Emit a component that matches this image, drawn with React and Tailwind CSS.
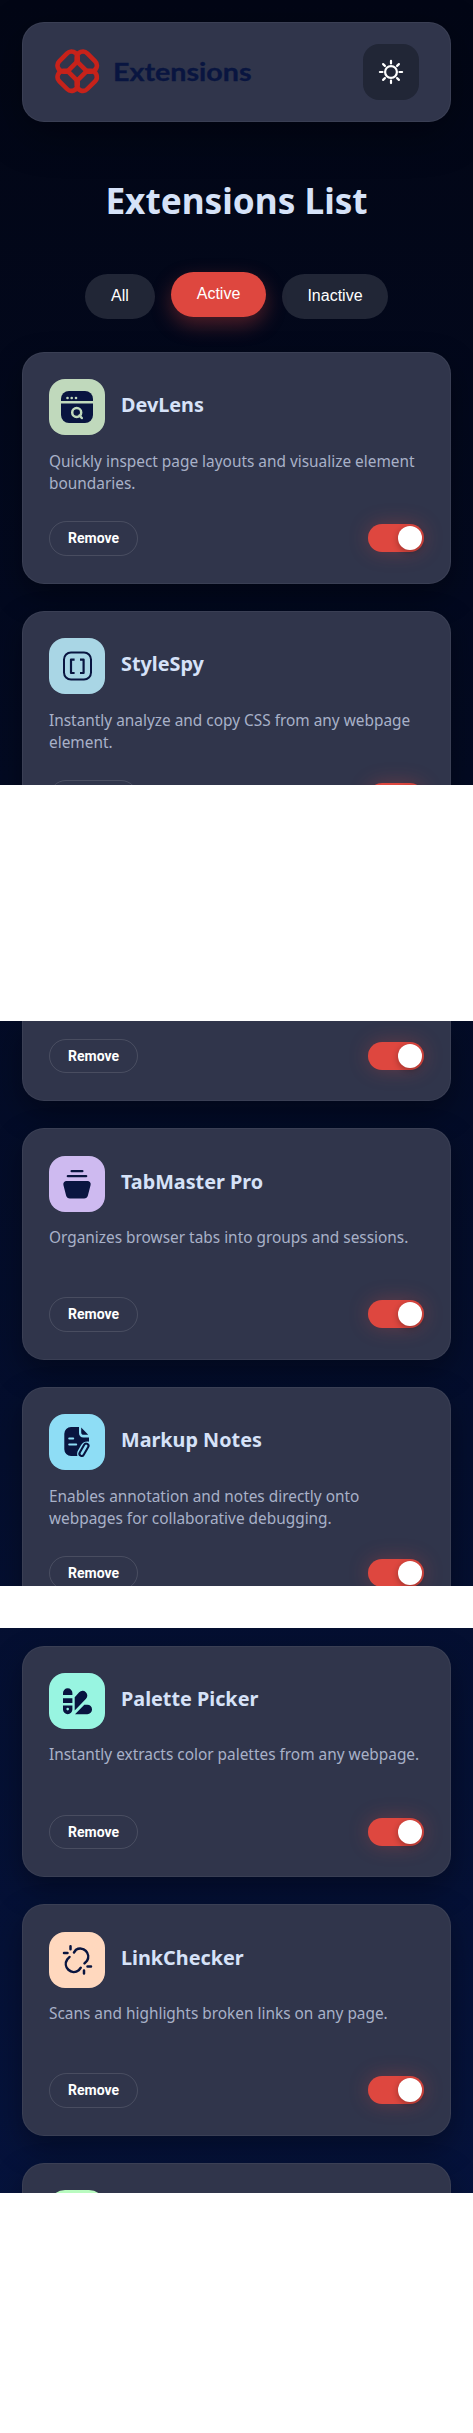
const navy = "#091540";

function Logo() {
  return (
    <svg width="200" height="46" viewBox="0 0 200 46" className="block">
      <g fill="none" stroke="#C7221A" strokeWidth="4.6" strokeLinejoin="round">
        <path d="M23 12.5V8.6a6.2 6.2 0 0 0-10.6-3.9L4.7 12.4a6.2 6.2 0 0 0 3.9 10.6h3.9z" transform="translate(-.3 -.3)" />
        <path d="M23 12.5V8.6a6.2 6.2 0 0 0-10.6-3.9L4.7 12.4a6.2 6.2 0 0 0 3.9 10.6h3.9z" transform="translate(44.7 -.3) scale(-1 1)" />
        <path d="M23 12.5V8.6a6.2 6.2 0 0 0-10.6-3.9L4.7 12.4a6.2 6.2 0 0 0 3.9 10.6h3.9z" transform="translate(-.3 44.7) scale(1 -1)" />
        <path d="M23 12.5V8.6a6.2 6.2 0 0 0-10.6-3.9L4.7 12.4a6.2 6.2 0 0 0 3.9 10.6h3.9z" transform="translate(44.7 44.7) scale(-1 -1)" />
      </g>
      <text x="58" y="32" fill={navy} stroke={navy} strokeWidth="0.35" fontFamily="Lato, sans-serif" fontWeight="700" fontSize="25.5" textLength="138.5" lengthAdjust="spacingAndGlyphs">Extensions</text>
    </svg>
  );
}

function Sun() {
  return (
    <svg width="26" height="26" viewBox="0 0 26 26" fill="none" stroke="#fff" strokeWidth="2.2" strokeLinecap="round">
      <circle cx="13" cy="13" r="5.9" />
      <path d="M13 1.9v2.6M13 21.5v2.6M1.9 13h2.6M21.5 13h2.6M5.1 5.1l1.8 1.8M19.1 19.1l1.8 1.8M5.1 20.9l1.8-1.8M19.1 6.9l1.8-1.8" />
    </svg>
  );
}

const icons = {
  lens: (
    <g>
      <path d="M12 20a8 8 0 0 1 8-8h16a8 8 0 0 1 8 8v2H12z" fill={navy} />
      <path d="M12 24.6h32V36a8 8 0 0 1-8 8H20a8 8 0 0 1-8-8z" fill={navy} />
      <g fill="#C0D9BC">
        <circle cx="18.5" cy="19" r="1.3" /><circle cx="22.7" cy="19" r="1.3" /><circle cx="27" cy="19" r="1.3" />
      </g>
      <g fill="none" stroke="#C0D9BC" strokeWidth="2.5" strokeLinecap="round">
        <circle cx="27.7" cy="33.5" r="4.5" /><path d="M30.5 36.5l2.3 2.5" />
      </g>
    </g>
  ),
  spy: (
    <g fill="none" stroke={navy} strokeWidth="2">
      <rect x="15" y="14.5" width="27" height="27" rx="7" />
      <path d="M25.6 21.6H22v13.4h3.6M31 21.6h3.6v13.4H31" strokeWidth="2.2" strokeLinejoin="round" />
    </g>
  ),
  tabs: (
    <g fill={navy}>
      <rect x="21.5" y="14" width="13" height="2.3" rx="1.1" />
      <rect x="17.7" y="19" width="20.6" height="2.3" rx="1.1" />
      <path d="M17.5 25h21a3.2 3.2 0 0 1 3.1 4l-2.7 10.4a4 4 0 0 1-3.9 3H21a4 4 0 0 1-3.9-3L14.4 29a3.2 3.2 0 0 1 3.1-4z" />
    </g>
  ),
  notes: (
    <g>
      <path d="M22 13h8v6a4.3 4.3 0 0 0 4.3 4.5H40v4.2c-4-.5-6.5 1-8 3.6l-3 5.2c-1 1.8-1 3.5-.6 5.5H22a6.7 6.7 0 0 1-6.7-6.7V19.7A6.7 6.7 0 0 1 22 13z" fill={navy} />
      <path d="M32.2 13.5l7 7.3h-4.4a2.6 2.6 0 0 1-2.6-2.6z" fill={navy} />
      <path d="M20.2 24.6h4M20.2 30.6h7" stroke="#8EDDF5" strokeWidth="2" strokeLinecap="round" />
      <rect x="32.7" y="29" width="4.6" height="13.5" rx="2.3" transform="rotate(30 35 35.7)" fill="none" stroke={navy} strokeWidth="2.1" />
    </g>
  ),
  palette: (
    <g fill={navy}>
      <path d="M14 22v-2a4.7 4.7 0 0 1 9.4 0v2zM14 25.2h9.4v4.7H14z" />
      <path fillRule="evenodd" d="M14 32.5h9.4v4a4.7 4.7 0 0 1-9.4 0zM18.7 34.8a1.3 1.3 0 1 0 0 2.6 1.3 1.3 0 0 0 0-2.6z" />
      <path d="M25.7 24.2l4.5-4.9a4.7 4.7 0 0 1 6.8 6.5L25.7 37.5zM26 41.2l9.3-9.5h3a4.75 4.75 0 0 1 0 9.5z" />
    </g>
  ),
  link: (
    <g fill="none" stroke={navy} strokeWidth="2.5" strokeLinecap="round">
      <path d="M25 20.5l2-2.7a8 8 0 0 1 11 11l-2.5 2.5M20.5 25l-2.3 2.5a8 8 0 0 0 11.5 10.8l2-2.5" />
      <path d="M21.5 14.2v3M15 21h3.5M35 38.5v3M38.5 34.5h3.5" />
    </g>
  ),
};

function Toggle() {
  return (
    <div className="flex h-7 w-14 items-center justify-end rounded-full bg-[#de473f] pr-0.5 shadow-[0_0_20px_rgba(222,71,63,0.3)]">
      <div className="size-6 rounded-full bg-white shadow-[0_2px_6px_rgba(0,0,0,0.3)]" />
    </div>
  );
}

function Actions({ label = "Remove" }) {
  return (
    <div className="flex items-center justify-between">
      <button className="h-[34.5px] w-[89px] rounded-full border border-white/12 font-[Roboto] text-sm font-bold text-white">{label}</button>
      <Toggle />
    </div>
  );
}

function Card({ icon, color, title, text, label }) {
  return (
    <article className="flex h-[231.5px] shrink-0 flex-col rounded-[22px] border border-white/5 bg-[#30354b] px-[26px] pt-[26.4px] pb-[27px] shadow-[0_12px_30px_rgba(0,0,0,0.35)]">
      <div className="flex items-center gap-4">
        <div className={`size-14 shrink-0 overflow-hidden rounded-2xl ${color}`}>
          {icon && <svg width="56" height="56" viewBox="0 0 56 56">{icons[icon]}</svg>}
        </div>
        {title && <h2 className="-mt-1 text-[19.8px] leading-7 font-bold text-[#d6e2f8]">{title}</h2>}
      </div>
      {text && <p className="mt-[15.6px] text-[15.4px] leading-[22px] text-[#a8b1c8]">{text}</p>}
      {title && <div className="mt-auto"><Actions label={label} /></div>}
    </article>
  );
}

export default function App() {
  return (
    <div className="h-[2433px] w-[473px] bg-linear-to-b from-[#020615] to-[#061440] font-['Noto_Sans',sans-serif]">
      <section className="h-[785px] overflow-hidden px-[22px] pt-[22px]">
        <header className="flex h-[99.5px] items-center justify-between rounded-[22px] border border-white/5 bg-[#30354b] pr-[31px] pl-8 shadow-[0_12px_40px_rgba(0,0,0,0.35)]">
          <Logo />
          <button className="flex size-14 items-center justify-center rounded-2xl bg-[#212636]"><Sun /></button>
        </header>
        <h1 className="mt-[54.5px] text-center text-[35.2px] leading-[48px] font-bold text-[#d6e2f8]">Extensions List</h1>
        <nav className="mt-[49.5px] flex justify-center gap-4 font-['Liberation_Sans'] text-base text-white">
          <button className="h-[45px] w-[70px] rounded-full bg-[#212636]">All</button>
          <button className="h-[45px] w-[95px] -translate-y-0.5 rounded-full bg-[#de473f] shadow-[0_8px_20px_rgba(222,71,63,0.35)]">Active</button>
          <button className="h-[45px] w-[106px] rounded-full bg-[#212636]">Inactive</button>
        </nav>
        <main className="mt-[33.5px] flex flex-col gap-[27.2px]">
          <Card icon="lens" color="bg-[#c0d9bc]" title="DevLens" text="Quickly inspect page layouts and visualize element boundaries." />
          <Card icon="spy" color="bg-[#a9d6e5]" title="StyleSpy" text="Instantly analyze and copy CSS from any webpage element." label="" />
        </main>
      </section>
      <div className="h-[236px] bg-white" />
      <section className="flex h-[565px] flex-col gap-[27.2px] overflow-hidden px-[22px]">
        <div className="h-[80px] shrink-0 rounded-b-[22px] border border-t-0 border-white/5 bg-[#30354b] px-[26px] pt-[17.5px] shadow-[0_12px_30px_rgba(0,0,0,0.35)]">
          <Actions />
        </div>
        <Card icon="tabs" color="bg-[#cebaf0]" title="TabMaster Pro" text="Organizes browser tabs into groups and sessions." />
        <Card icon="notes" color="bg-[#8eddf5]" title="Markup Notes" text="Enables annotation and notes directly onto webpages for collaborative debugging." />
      </section>
      <div className="h-[42px] bg-white" />
      <section className="flex h-[565px] flex-col gap-[27.2px] overflow-hidden px-[22px] pt-[17.5px]">
        <Card icon="palette" color="bg-[#98f5e1]" title="Palette Picker" text="Instantly extracts color palettes from any webpage." />
        <Card icon="link" color="bg-[#ffd8be]" title="LinkChecker" text="Scans and highlights broken links on any page." />
        <Card color="bg-[#b9fbc0]" />
      </section>
      <div className="h-[240px] bg-white" />
    </div>
  );
}
